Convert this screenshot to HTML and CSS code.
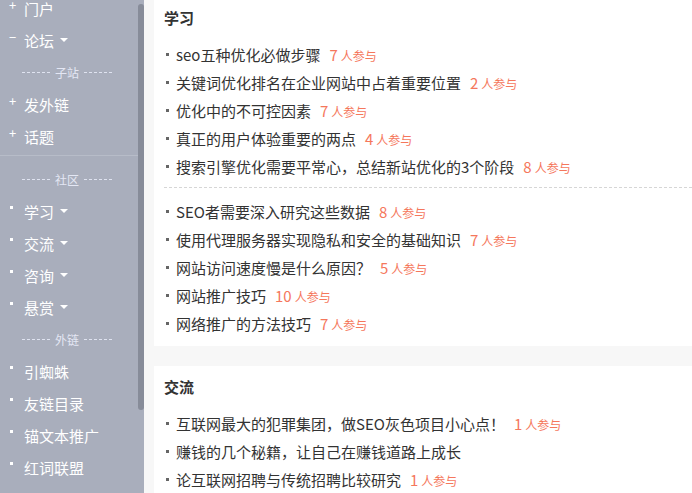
FILE: index.html
```html
<!DOCTYPE html>
<html lang="zh-CN">
<head>
    <meta charset="UTF-8">
    <meta name="viewport" content="width=device-width, initial-scale=1.0">
    <title>社区</title>
    <link rel="stylesheet" href="styles.css">
</head>
<body>
    <aside class="sidebar">
        <ul class="nav">
            <li class="nav-item"><span class="ico plus">+</span>门户</li>
            <li class="nav-item"><span class="ico minus">−</span>论坛<span class="caret"></span></li>
            <li class="nav-group"><span class="dash"></span>子站<span class="dash"></span></li>
            <li class="nav-item"><span class="ico plus">+</span>发外链</li>
            <li class="nav-item"><span class="ico plus">+</span>话题</li>
            <li class="nav-divider"></li>
            <li class="nav-group"><span class="dash"></span>社区<span class="dash"></span></li>
            <li class="nav-item"><span class="ico dot"></span>学习<span class="caret"></span></li>
            <li class="nav-item"><span class="ico dot"></span>交流<span class="caret"></span></li>
            <li class="nav-item"><span class="ico dot"></span>咨询<span class="caret"></span></li>
            <li class="nav-item"><span class="ico dot"></span>悬赏<span class="caret"></span></li>
            <li class="nav-group"><span class="dash"></span>外链<span class="dash"></span></li>
            <li class="nav-item"><span class="ico dot"></span>引蜘蛛</li>
            <li class="nav-item"><span class="ico dot"></span>友链目录</li>
            <li class="nav-item"><span class="ico dot"></span>锚文本推广</li>
            <li class="nav-item"><span class="ico dot"></span>红词联盟</li>
        </ul>
        <div class="thumb"></div>
    </aside>

    <main class="content">
        <section class="card">
            <h3>学习</h3>
            <ul class="topics">
                <li><span class="t">seo五种优化必做步骤</span><span class="num">7<small>人参与</small></span></li>
                <li><span class="t">关键词优化排名在企业网站中占着重要位置</span><span class="num">2<small>人参与</small></span></li>
                <li><span class="t">优化中的不可控因素</span><span class="num">7<small>人参与</small></span></li>
                <li><span class="t">真正的用户体验重要的两点</span><span class="num">4<small>人参与</small></span></li>
                <li><span class="t">搜索引擎优化需要平常心，总结新站优化的3个阶段</span><span class="num">8<small>人参与</small></span></li>
            </ul>
            <ul class="topics split">
                <li><span class="t">SEO者需要深入研究这些数据</span><span class="num">8<small>人参与</small></span></li>
                <li><span class="t">使用代理服务器实现隐私和安全的基础知识</span><span class="num">7<small>人参与</small></span></li>
                <li><span class="t">网站访问速度慢是什么原因？</span><span class="num">5<small>人参与</small></span></li>
                <li><span class="t">网站推广技巧</span><span class="num">10<small>人参与</small></span></li>
                <li><span class="t">网络推广的方法技巧</span><span class="num">7<small>人参与</small></span></li>
            </ul>
        </section>
        <section class="card">
            <h3>交流</h3>
            <ul class="topics">
                <li><span class="t">互联网最大的犯罪集团，做SEO灰色项目小心点！</span><span class="num">1<small>人参与</small></span></li>
                <li><span class="t">赚钱的几个秘籍，让自己在赚钱道路上成长</span></li>
                <li><span class="t">论互联网招聘与传统招聘比较研究</span><span class="num">1<small>人参与</small></span></li>
            </ul>
        </section>
    </main>
</body>
</html>
```

FILE: styles.css
```css
* {
    box-sizing: border-box;
}
body {
    margin: 0;
    height: 493px;
    overflow: hidden;
    display: flex;
    background: #f7f7f7;
    font-family: "Noto Sans CJK SC", "Noto Sans", sans-serif;
    color: #333;
}
ul {
    list-style: none;
    margin: 0;
    padding: 0;
}

/* sidebar */
.sidebar {
    position: relative;
    width: 144px;
    flex-shrink: 0;
    background: #a9aebc;
    color: #fff;
}
.nav {
    margin-top: -8px;
}
.nav-item {
    display: flex;
    align-items: center;
    height: 32px;
    font-size: 15px;
    padding-left: 9px;
}
.ico {
    width: 15px;
    font-size: 13px;
    line-height: 1;
    margin-top: -7px;
}
.ico.dot::before {
    content: "";
    display: block;
    width: 3px;
    height: 3px;
    margin-left: 1px;
    background: #fff;
}
.caret {
    width: 0;
    height: 0;
    margin-left: 6px;
    border-left: 4px solid transparent;
    border-right: 4px solid transparent;
    border-top: 4px solid #fff;
}
.nav-group {
    display: flex;
    align-items: center;
    gap: 5px;
    height: 32px;
    padding-left: 22px;
    font-size: 12px;
    color: #e4e7f4;
}
.dash {
    width: 28px;
    border-top: 1px dashed #dfe3f0;
}
.nav-divider {
    margin: 3px 0 7px;
    border-top: 1px solid #b7bcc8;
}
.thumb {
    position: absolute;
    top: 4px;
    right: 0;
    width: 6px;
    height: 406px;
    border-radius: 3px;
    background: #878c99;
}

/* content */
.content {
    flex: 1;
    padding-left: 10px;
    margin-top: -3px;
    display: flex;
    flex-direction: column;
    gap: 20px;
}
.card {
    background: #fff;
    padding: 9px 0 9px 10px;
}
.card h3 {
    margin: 0 0 10px;
    font-size: 15px;
    line-height: 24px;
    font-weight: bold;
}
.topics li {
    display: flex;
    align-items: center;
    height: 28px;
    font-size: 15px;
}
.topics li::before {
    content: "";
    width: 3px;
    height: 3px;
    margin: 0 7px 0 2px;
    background: #666;
}
.topics.split {
    margin-top: 7px;
    padding-top: 9px;
    border-top: 1px dashed #d6d6d6;
}
.num {
    margin-left: 9px;
    color: #f5775c;
    font-size: 15px;
}
.num small {
    font-size: 12px;
    margin-left: 3px;
}
```
